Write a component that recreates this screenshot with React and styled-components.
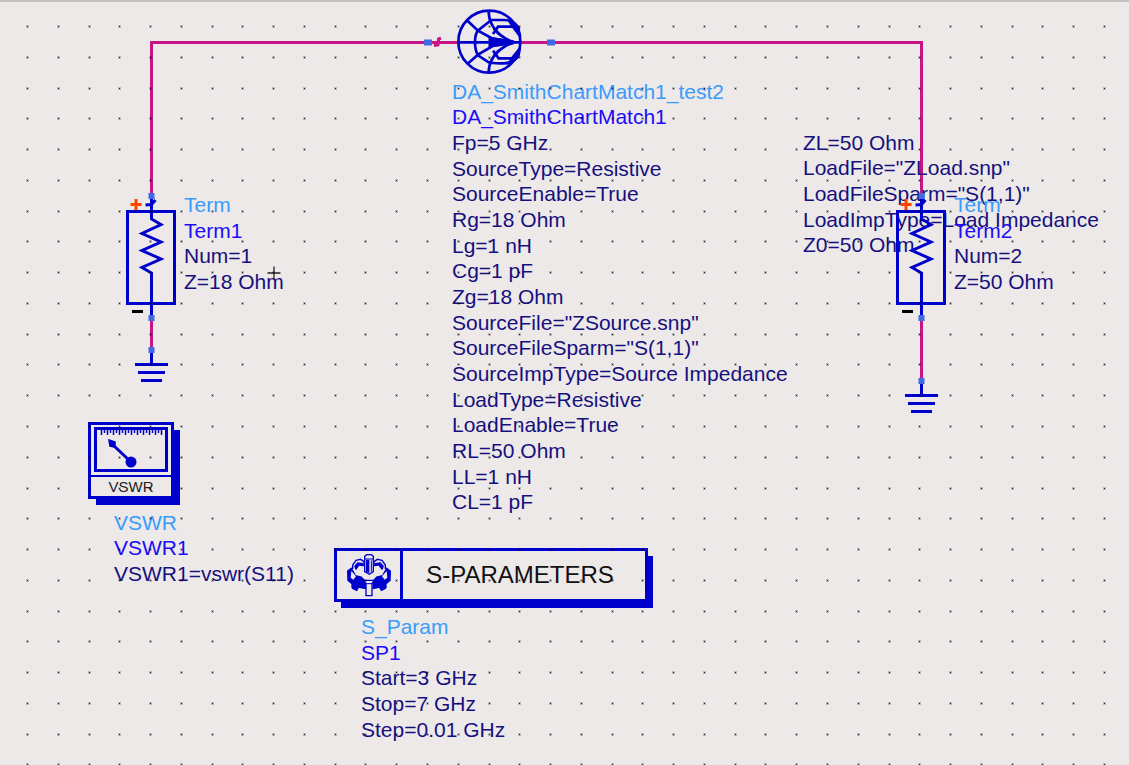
import React from "react";
import styled, { createGlobalStyle } from "styled-components";

const color = {
  paper: "#ede9e8",
  symbol: "#0000cd",
  wire: "#c71585",
  pin: "#4169e1",
  type: "#3a9bfb",
  name: "#1c0cf8",
  param: "#15107e",
  plus: "#ff4500",
};

const GlobalStyle = createGlobalStyle`
  *, *::before, *::after { box-sizing: border-box; }
  body {
    margin: 0;
    background: ${color.paper};
    font-family: "Liberation Sans", Arial, sans-serif;
  }
`;

const Canvas = styled.main`
  position: relative;
  min-height: 100vh;
  overflow: hidden;
  background: ${color.paper};
  border-top: 2px solid #c4c3c1;
`;

const Sheet = styled.div`
  position: absolute;
  inset: -2px 0 0;
`;

const Layer = styled.svg`
  position: absolute;
  inset: 0;
  width: 100%;
  height: 100%;
  pointer-events: none;
`;

const Item = styled.div`
  position: absolute;
  left: ${(p) => p.$x}px;
  top: ${(p) => p.$y}px;
`;

const Symbol = styled.svg`
  display: block;
  overflow: visible;
`;

const Params = styled.ul`
  display: grid;
  grid-auto-rows: 1fr;
  align-items: center;
  height: ${(p) => p.$height}px;
  margin: 0;
  padding: 0;
  list-style: none;
  font-size: 21px;
  line-height: 24px;
  white-space: nowrap;
`;

const Param = styled.li`
  color: ${(p) => color[p.$kind]};
`;

const MeterBox = styled.div`
  display: flex;
  flex-direction: column;
  width: 86px;
  height: 77px;
  background: ${color.paper};
  border: 3px solid ${color.symbol};
  box-shadow: 7px 7px 0 -1px ${color.symbol};
`;

const MeterDial = styled.div`
  flex: 1;
  padding: 2px 3px;
  border-bottom: 2px solid ${color.symbol};
`;

const MeterLabel = styled.div`
  color: #222;
  font-size: 15px;
  line-height: 19px;
  text-align: center;
`;

const Banner = styled.div`
  display: flex;
  width: 314px;
  height: 54px;
  background: ${color.paper};
  border: 3px solid ${color.symbol};
  box-shadow: 6px 7px 0 -1px ${color.symbol};
`;

const BannerIcon = styled.div`
  display: flex;
  align-items: center;
  padding: 0 6px 0 7px;
  border-right: 3px solid ${color.symbol};
`;

const BannerTitle = styled.div`
  flex: 1;
  padding-right: 8px;
  color: #111;
  font-size: 24px;
  line-height: 48px;
  text-align: center;
`;

function Pin({ x, y, w = 6, h = 6 }) {
  return <rect x={x - w / 2} y={y - h / 2} width={w} height={h} fill={color.pin} stroke="none" />;
}

function SmithSymbol() {
  return (
    <Symbol width="72" height="72" viewBox="0 0 216 216" fill="none" stroke={color.symbol} strokeWidth="8">
      <circle cx="106" cy="107" r="93" />
      <path d="M10 109H200" />
      <path d="M196 70C184 48 166 42 150 42H112L72 73C65 82 63 96 63 109C63 124 66 138 72 148L104 169C116 173 134 172 150 172C168 171 184 164 194 148" />
      <path d="M184 62H132L117 84M117 134L134 157H182" />
      <path d="M104 14C104 30 106 40 112 52C124 80 154 102 180 108M104 202C104 186 106 176 112 164C124 138 154 116 180 110" />
      <path d="M38 42L72 74L116 98L180 108M40 174L72 146L116 120L180 110" />
      <path d="M106 94L182 108L106 122Z" fill={color.symbol} strokeWidth="5" />
      <path d="M166 46C178 48 187 55 193 66L199 92L176 62ZM166 170C178 166 187 160 194 148L198 126L174 156Z" fill={color.symbol} strokeWidth="7" />
      <path d="M120 68L136 86M120 150L136 132" />
    </Symbol>
  );
}

function TermSymbol() {
  return (
    <Symbol width="50" height="130" fill="none" stroke={color.symbol} strokeWidth="3">
      <rect x="1.5" y="19.5" width="47" height="92" />
      <path d="M25.500 4V27L35 32.500L16 41.500L35 50L16 58.500L35 67L16 75.500L25.500 81V126" />
      <path d="M19.500 13L25.500 12.500L29.500 8" />
      <path d="M4.500 12.500H15.500M10 7V18" stroke={color.plus} />
      <path d="M6 119.500H17" stroke="#000" />
      <Pin x={25.5} y={4} />
      <Pin x={25.5} y={126} />
    </Symbol>
  );
}

function GroundSymbol() {
  return (
    <Symbol width="34" height="36" fill="none" stroke={color.symbol} strokeWidth="3">
      <path d="M17.500 4V18.500M1 18.500H34M4 26.500H31M7 34.500H28" />
      <Pin x={17.5} y={4} />
    </Symbol>
  );
}

function MeterFace() {
  const ticks = Array.from({ length: 21 }, (_, i) => 7 + i * 3);
  return (
    <Symbol width="74" height="45" fill="none" stroke={color.symbol}>
      <rect x="1.5" y="1.500" width="71" height="42" strokeWidth="3" />
      {ticks.map((x, i) => (
        <path key={x} d={`M${x + 0.5} 2V${i % 2 ? 6 : 8}`} strokeWidth="1.500" />
      ))}
      <path d="M18 17L37 35" strokeWidth="3" />
      <path d="M15 13L21 15L21 20L16 19Z" fill={color.symbol} strokeWidth="1.500" />
      <circle cx="37" cy="35" r="5.500" fill={color.symbol} stroke="none" />
    </Symbol>
  );
}

function GearSymbol() {
  return (
    <Symbol width="50" height="48" viewBox="0 0 150 144" fill={color.paper} stroke={color.symbol} strokeWidth="4">
      <path d="M11 60L22 52L34 74L52 78L60 92V110L42 108L36 116L24 110V98L12 88Z" fill={color.symbol} />
      <path d="M139 60L128 52L116 74L98 78L90 92V110L108 108L114 116L126 110V98L138 88Z" fill={color.symbol} />
      <path d="M30 84L56 82L64 92V112L44 108L38 118L26 112ZM120 84L94 82L88 92V112L106 108L112 118L124 112Z" fill={color.symbol} />
      <path d="M26 54V42L36 28L50 25L60 32V44L42 38L34 54M124 54V42L114 28L100 25L90 32V44L108 38L116 54" />
      <path d="M30 46L40 34L58 36V46L46 44L36 58ZM120 46L110 34L92 36V46L104 44L114 58Z" fill={color.symbol} stroke="none" />
      <path d="M22 60L36 76L28 86L20 80ZM128 60L114 76L122 86L130 80Z" stroke="none" />
      <path d="M62 16L68 11H82L88 16V62L76 70L62 62Z" />
      <path d="M66 26H76V66L66 62Z" fill={color.symbol} stroke="none" />
      <path d="M62 24H88M82 28V62" strokeWidth="3" />
      <path d="M66 134V98L60 88H90L84 98V134Z" />
      <path d="M66 98H84" strokeWidth="3" />
    </Symbol>
  );
}

function Wires() {
  return (
    <Layer aria-hidden="true" fill="none" stroke={color.wire} strokeWidth="3">
      <path d="M151.500 196V42.500H460M520 42.500H921.500V196M151.500 318V350M921.500 318V381" />
      <path d="M434 45.500L438 45L438.500 39L441 38" />
      <Pin x={428} y={42.5} w={8} />
      <Pin x={551} y={42.5} w={8} />
    </Layer>
  );
}

function GridDots() {
  const steps = Array.from({ length: 13 }, (_, i) => Math.round((i * 400) / 13));
  return (
    <Layer aria-hidden="true">
      <defs>
        <pattern id="grid-dots" x="26" y="25" width="400" height="400" patternUnits="userSpaceOnUse">
          {steps.map((y) =>
            steps.map((x) => (
              <g key={`${x}-${y}`}>
                <rect x={x} y={y} width="3" height="3" fill="#000" opacity="0.2" />
                <rect x={x + 1} y={y + 1} width="1" height="1" fill="#000" opacity="0.85" />
              </g>
            ))
          )}
        </pattern>
      </defs>
      <rect width="100%" height="100%" fill="url(#grid-dots)" />
    </Layer>
  );
}

function Crosshair() {
  return (
    <Symbol width="14" height="14" stroke="#222" strokeWidth="1.300">
      <path d="M0.500 7H13.500M7 0.500V13.500" />
    </Symbol>
  );
}

function ParamList({ type, name, params, height }) {
  return (
    <Params $height={height}>
      {type && <Param $kind="type">{type}</Param>}
      {name && <Param $kind="name">{name}</Param>}
      {params.map((text) => (
        <Param key={text} $kind="param">{text}</Param>
      ))}
    </Params>
  );
}

const matchParams = [
  "Fp=5 GHz",
  "SourceType=Resistive",
  "SourceEnable=True",
  "Rg=18 Ohm",
  "Lg=1 nH",
  "Cg=1 pF",
  "Zg=18 Ohm",
  'SourceFile="ZSource.snp"',
  'SourceFileSparm="S(1,1)"',
  "SourceImpType=Source Impedance",
  "LoadType=Resistive",
  "LoadEnable=True",
  "RL=50 Ohm",
  "LL=1 nH",
  "CL=1 pF",
];

const loadParams = [
  "ZL=50 Ohm",
  'LoadFile="ZLoad.snp"',
  'LoadFileSparm="S(1,1)"',
  "LoadImpType=Load Impedance",
  "Z0=50 Ohm",
];

export default function App() {
  return (
    <>
      <GlobalStyle />
      <Canvas>
        <Sheet>
          <Wires />

          <Item $x={454} $y={6}><SmithSymbol /></Item>
          <Item $x={452} $y={79}>
            <ParamList type="DA_SmithChartMatch1_test2" name="DA_SmithChartMatch1" params={matchParams} height={436} />
          </Item>
          <Item $x={803} $y={130}>
            <ParamList params={loadParams} height={128} />
          </Item>

          <Item $x={126} $y={192}><TermSymbol /></Item>
          <Item $x={134} $y={346}><GroundSymbol /></Item>
          <Item $x={184} $y={192}>
            <ParamList type="Term" name="Term1" params={["Num=1", "Z=18 Ohm"]} height={103} />
          </Item>

          <Item $x={896} $y={192}><TermSymbol /></Item>
          <Item $x={904} $y={377}><GroundSymbol /></Item>
          <Item $x={954} $y={192}>
            <ParamList type="Term" name="Term2" params={["Num=2", "Z=50 Ohm"]} height={103} />
          </Item>

          <Item $x={88} $y={422}>
            <MeterBox>
              <MeterDial><MeterFace /></MeterDial>
              <MeterLabel>VSWR</MeterLabel>
            </MeterBox>
          </Item>
          <Item $x={114} $y={510}>
            <ParamList type="VSWR" name="VSWR1" params={["VSWR1=vswr(S11)"]} height={77} />
          </Item>

          <Item $x={334} $y={548}>
            <Banner>
              <BannerIcon><GearSymbol /></BannerIcon>
              <BannerTitle>S-PARAMETERS</BannerTitle>
            </Banner>
          </Item>
          <Item $x={361} $y={614}>
            <ParamList type="S_Param" name="SP1" params={["Start=3 GHz", "Stop=7 GHz", "Step=0.01 GHz"]} height={129} />
          </Item>

          <Item $x={267} $y={266}><Crosshair /></Item>
          <GridDots />
        </Sheet>
      </Canvas>
    </>
  );
}
